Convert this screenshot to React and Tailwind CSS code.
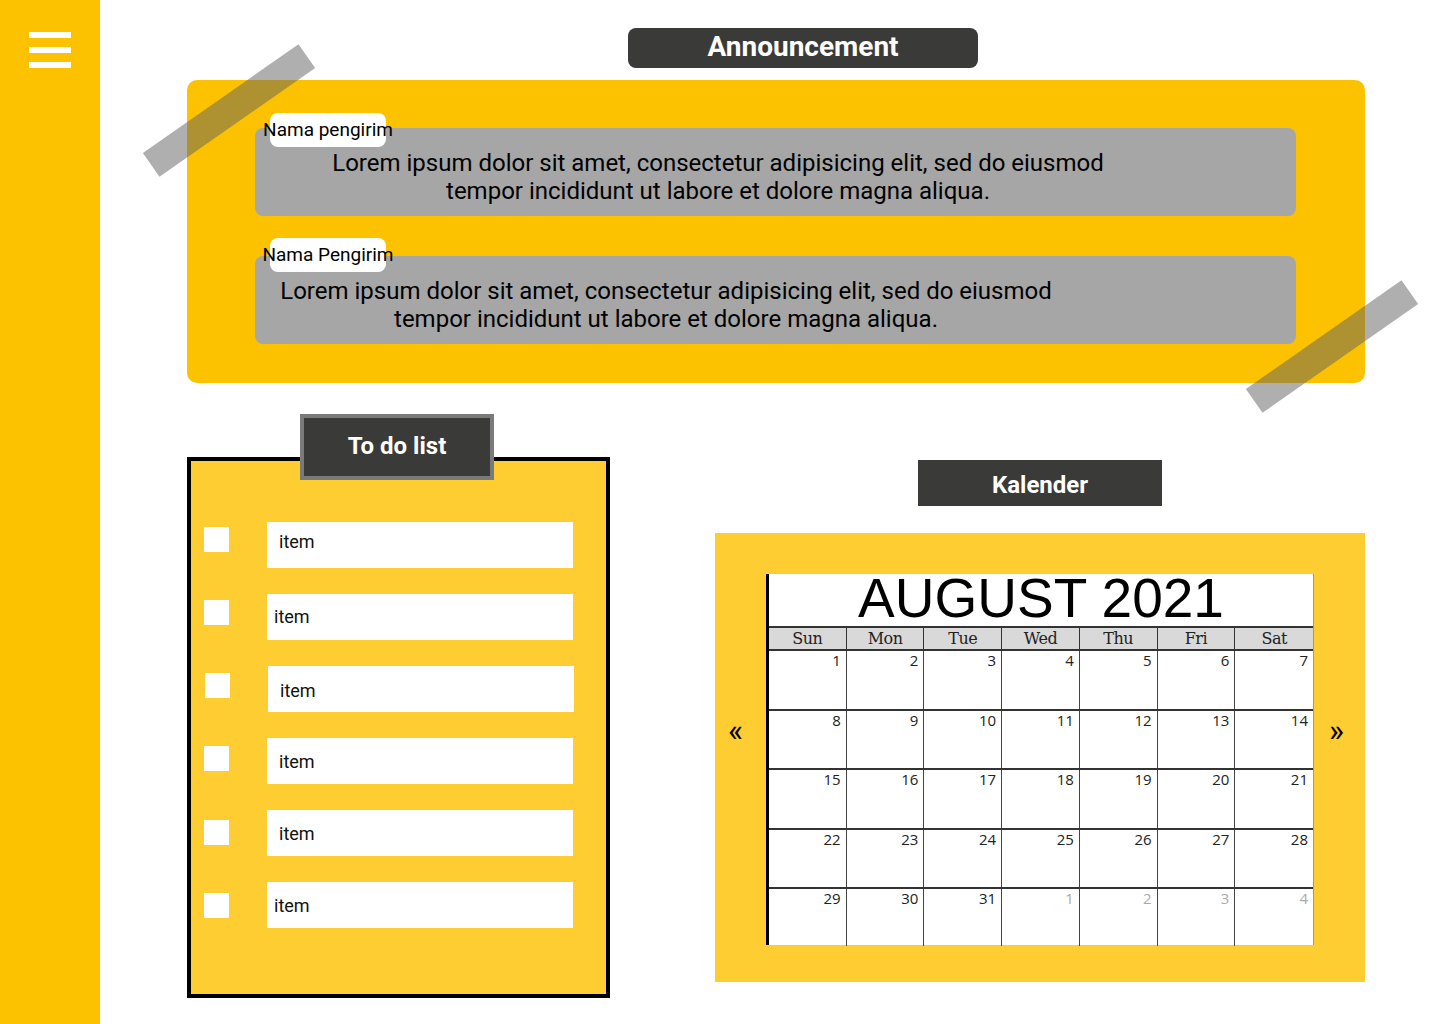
import React from 'react';

const messages = [
    {
        name: 'Nama pengirim',
        text: 'ml-[63px]',
        wrap: 'pt-[15px]',
    },
    {
        name: 'Nama Pengirim',
        text: 'ml-[11px]',
        wrap: 'mt-[22px] pt-[18px]',
    },
];

const todos = [
    { cb: 'mt-[5px] ml-[13px]', pad: 'pl-[12px] pb-[7px]' },
    { cb: 'mt-[6px] ml-[13px]', pad: 'pl-[7px] pb-[1px]' },
    { cb: 'mt-[7px] ml-[14px]', pad: 'pl-[12px] pt-[3px]' },
    { cb: 'mt-[8px] ml-[13px]', pad: 'pl-[12px]' },
    { cb: 'mt-[10px] ml-[13px]', pad: 'pl-[12px]' },
    { cb: 'mt-[11px] ml-[13px]', pad: 'pl-[7px]' },
];

const days = ['Sun', 'Mon', 'Tue', 'Wed', 'Thu', 'Fri', 'Sat'];

// 5 minggu, Agustus 2021 mulai hari Minggu
const weeks = [
    [1, 2, 3, 4, 5, 6, 7],
    [8, 9, 10, 11, 12, 13, 14],
    [15, 16, 17, 18, 19, 20, 21],
    [22, 23, 24, 25, 26, 27, 28],
    [29, 30, 31, '1', '2', '3', '4'],
];

const rowHeights = ['h-[60px]', 'h-[59px]', 'h-[60px]', 'h-[59px]', 'h-[57px]'];

const Tape = ({ className }) => (
    <div className={`absolute w-[190px] h-[29px] bg-[rgba(96,96,96,0.5)] -rotate-[35deg] ${className}`} />
);

const App = () => {
    return (
        <div className="w-[1440px] h-[1024px] flex bg-white overflow-hidden font-['Roboto',sans-serif]">
            {/* Sidebar */}
            <div className="w-[100px] shrink-0 bg-[#FCC200] pt-[32px] pl-[29px]">
                <div className="flex flex-col gap-[9px]">
                    <div className="w-[42px] h-[6px] bg-white" />
                    <div className="w-[42px] h-[6px] bg-white" />
                    <div className="w-[42px] h-[6px] bg-white" />
                </div>
            </div>

            {/* Konten */}
            <div className="relative flex-1 pl-[87px] pt-[28px]">
                <div className="ml-[441px] w-[350px] h-[40px] rounded-lg bg-[#3A3A38] flex items-center justify-center text-white text-[28px] font-bold leading-none pb-[2px]">
                    Announcement
                </div>

                <div className="mt-[12px] w-[1178px] h-[303px] rounded-[10px] bg-[#FCC200] pt-[33px] pl-[68px]">
                    {messages.map((m, i) => (
                        <div key={i} className={`relative w-[1041px] ${m.wrap}`}>
                            <div className="absolute z-10 left-[15px] top-0 w-[116px] h-[34px] rounded-lg bg-white flex items-center justify-center pb-[2px]">
                                <span className="text-[19px] text-black whitespace-nowrap leading-none">{m.name}</span>
                            </div>
                            <div className="h-[88px] rounded-lg bg-[#A6A6A6] pt-[21px]">
                                <p className={`w-[800px] text-center text-[24px] leading-[28px] text-black ${m.text}`}>
                                    Lorem ipsum dolor sit amet, consectetur adipisicing elit, sed do eiusmod
                                    <br />
                                    tempor incididunt ut labore et dolore magna aliqua.
                                </p>
                            </div>
                        </div>
                    ))}
                </div>

                <Tape className="left-[34px] top-[96px]" />
                <Tape className="left-[1137px] top-[332px]" />

                {/* Bagian bawah */}
                <div className="mt-[31px] flex items-start">
                    {/* To do list */}
                    <div className="w-[423px] shrink-0">
                        <div className="relative z-10 ml-[113px] w-[194px] h-[66px] border-4 border-[#7A7A7A] bg-[#3A3A38] flex items-center justify-center pb-[2px] text-white text-[24px] font-bold">
                            To do list
                        </div>
                        <div className="-mt-[23px] h-[541px] border-4 border-black bg-[#FDCD32] pt-[61px] flex flex-col gap-[26px]">
                            {todos.map((t, i) => (
                                <div key={i} className="flex items-start h-[46px]">
                                    <div className={`w-[25px] h-[25px] bg-white shrink-0 ${t.cb}`} />
                                    <div className={`ml-[38px] w-[306px] h-[46px] bg-white flex items-center text-[18px] text-[#111] ${t.pad}`}>
                                        item
                                    </div>
                                </div>
                            ))}
                        </div>
                    </div>

                    {/* Kalender */}
                    <div className="ml-[105px] w-[650px] shrink-0 pt-[46px]">
                        <div className="ml-[203px] w-[244px] h-[46px] bg-[#3A3A38] flex items-center justify-center pt-[4px] text-white text-[24px] font-bold">
                            Kalender
                        </div>
                        <div className="mt-[27px] h-[449px] bg-[#FDCD32] pt-[41px] flex">
                            <div className="w-[51px] pt-[140px] pr-[10px] text-center text-[32px] leading-[32px] text-black">«</div>
                            <div className="w-[548px] h-[371px] bg-white border-l-[3px] border-l-black border-r border-r-[#9A9A9A] flex flex-col">
                                <div className="h-[52px] shrink-0 text-center text-[55px] leading-[48px] text-black font-['Liberation_Sans',Arial,sans-serif]">
                                    AUGUST 2021
                                </div>
                                <div className="grid grid-cols-7 h-[25px] shrink-0 bg-[#D9D9D9] border-y-2 border-[#333]">
                                    {days.map((d, i) => (
                                        <div key={d} className={`flex items-center justify-center text-[16px] leading-[20px] text-[#222] font-['DejaVu_Serif',serif] tracking-[-0.5px] ${i < 6 ? 'border-r border-[#333]' : ''}`}>
                                            {d}
                                        </div>
                                    ))}
                                </div>
                                {weeks.map((w, r) => (
                                    <div key={r} className={`grid grid-cols-7 shrink-0 ${rowHeights[r]} ${r < 4 ? 'border-b-2 border-[#333]' : ''}`}>
                                        {w.map((n, c) => (
                                            <div key={c} className={`text-right pr-[5px] text-[15px] leading-[18px] font-['Open_Sans',sans-serif] ${typeof n === 'string' ? 'text-[#AAAAAA]' : 'text-[#222]'} ${c < 6 ? 'border-r border-[#444]' : ''}`}>
                                                {n}
                                            </div>
                                        ))}
                                    </div>
                                ))}
                            </div>
                            <div className="w-[51px] pt-[140px] pr-[6px] text-center text-[32px] leading-[32px] text-black">»</div>
                        </div>
                    </div>
                </div>
            </div>
        </div>
    );
};

export default App;
